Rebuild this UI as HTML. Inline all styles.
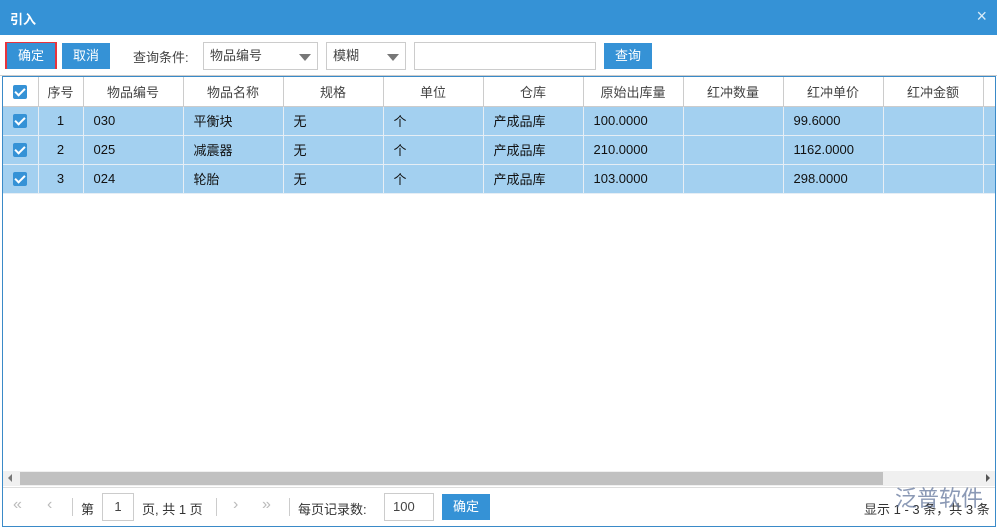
<!DOCTYPE html><html><head><meta charset="utf-8"><style>
*{margin:0;padding:0;box-sizing:border-box}
body{width:997px;height:528px;background:#fff;font-family:"Liberation Sans","Noto Sans CJK SC",sans-serif;font-size:13px;color:#333;position:relative;overflow:hidden}
.abs{position:absolute}
.title{left:0;top:0;width:997px;height:35px;background:#3592d6;color:#fff;font-weight:bold;font-size:13px;padding:9px 10px}
.btn{background:#3592d6;color:#fff;text-align:center;line-height:26px;height:26px}
.sel{border:1px solid #ccc;height:28px;line-height:26px;padding-left:6px;color:#444}
.tri{position:absolute;right:6px;top:11px;border-left:6px solid transparent;border-right:6px solid transparent;border-top:7px solid #777}
table{border-collapse:collapse;table-layout:fixed}
td{height:29px;border-right:1px solid #ddd;border-bottom:1px solid #ddd;white-space:nowrap;overflow:hidden;padding-left:10px;color:#111}
thead td{text-align:center;padding:0;color:#444;border-right:1px solid #ccc;border-bottom:1px solid #ccc}
tbody tr{background:#a3d0f0}
tbody td{border-color:#e6eef5}
.cb{display:inline-block;width:14px;height:14px;background:#3592d6;border-radius:2px;position:relative;vertical-align:middle}
.cb:after{content:"";position:absolute;left:4px;top:1px;width:4px;height:8px;border:solid #fff;border-width:0 2px 2px 0;transform:rotate(45deg)}
.pg{color:#bbb;font-size:16px}
</style></head><body>
<div class="abs title">引入<span style="position:absolute;right:10px;top:6px;font-weight:normal;font-size:18px;color:#d8ebf8">×</span></div>
<div class="abs" style="left:5px;top:42px;width:52px;height:27px;border:2px solid #e8333c"></div>
<div class="abs btn" style="left:7px;top:43px;width:48px">确定</div>
<div class="abs btn" style="left:62px;top:43px;width:48px">取消</div>
<div class="abs" style="left:133px;top:47px;color:#444">查询条件:</div>
<div class="abs sel" style="left:203px;top:42px;width:115px">物品编号<span class="tri"></span></div>
<div class="abs sel" style="left:326px;top:42px;width:80px">模糊<span class="tri"></span></div>
<div class="abs sel" style="left:414px;top:42px;width:182px"></div>
<div class="abs btn" style="left:604px;top:43px;width:48px">查询</div>
<div class="abs" style="left:0;top:75px;width:997px;height:1px;background:#ccc"></div>
<div class="abs" style="left:2px;top:76px;width:994px;height:451px;border:1px solid #3a8ac8"></div>
<div class="abs" style="left:3px;top:77px;width:992px;height:120px;overflow:hidden">
<table style="width:1000px">
<colgroup><col style="width:35px"><col style="width:45px"><col style="width:100px"><col style="width:100px"><col style="width:100px"><col style="width:100px"><col style="width:100px"><col style="width:100px"><col style="width:100px"><col style="width:100px"><col style="width:100px"><col style="width:20px"></colgroup>
<thead><tr><td><span class="cb"></span></td><td>序号</td><td>物品编号</td><td>物品名称</td><td>规格</td><td>单位</td><td>仓库</td><td>原始出库量</td><td>红冲数量</td><td>红冲单价</td><td>红冲金额</td><td></td></tr></thead>
<tbody>
<tr><td style="padding:0;text-align:center"><span class="cb"></span></td><td style="padding:0;text-align:center">1</td><td>030</td><td>平衡块</td><td>无</td><td>个</td><td>产成品库</td><td>100.0000</td><td></td><td>99.6000</td><td></td><td></td></tr>
<tr><td style="padding:0;text-align:center"><span class="cb"></span></td><td style="padding:0;text-align:center">2</td><td>025</td><td>减震器</td><td>无</td><td>个</td><td>产成品库</td><td>210.0000</td><td></td><td>1162.0000</td><td></td><td></td></tr>
<tr><td style="padding:0;text-align:center"><span class="cb"></span></td><td style="padding:0;text-align:center">3</td><td>024</td><td>轮胎</td><td>无</td><td>个</td><td>产成品库</td><td>103.0000</td><td></td><td>298.0000</td><td></td><td></td></tr>
</tbody></table></div>
<div class="abs" style="left:3px;top:471px;width:992px;height:15px;background:#f0f0f0"></div>
<div class="abs" style="left:20px;top:472px;width:863px;height:13px;background:#c1c1c1"></div>
<div class="abs" style="left:8px;top:474px;border-top:4px solid transparent;border-bottom:4px solid transparent;border-right:4px solid #777"></div>
<div class="abs" style="left:986px;top:474px;border-top:4px solid transparent;border-bottom:4px solid transparent;border-left:4px solid #555"></div>
<div class="abs" style="left:3px;top:487px;width:992px;height:1px;background:#ddd"></div>
<div class="abs pg" style="left:13px;top:496px">«</div>
<div class="abs pg" style="left:47px;top:496px">‹</div>
<div class="abs" style="left:72px;top:498px;width:1px;height:18px;background:#ccc"></div>
<div class="abs" style="left:81px;top:499px">第</div>
<div class="abs sel" style="left:102px;top:493px;width:32px;padding:0;text-align:center">1</div>
<div class="abs" style="left:142px;top:499px">页, 共 1 页</div>
<div class="abs" style="left:216px;top:498px;width:1px;height:18px;background:#ccc"></div>
<div class="abs pg" style="left:233px;top:496px">›</div>
<div class="abs pg" style="left:262px;top:496px">»</div>
<div class="abs" style="left:289px;top:498px;width:1px;height:18px;background:#ccc"></div>
<div class="abs" style="left:298px;top:499px">每页记录数:</div>
<div class="abs sel" style="left:384px;top:493px;width:50px;padding-left:8px">100</div>
<div class="abs btn" style="left:442px;top:494px;width:48px">确定</div>
<div class="abs" style="left:864px;top:499px;color:#333">显示 1 - 3 条，共 3 条</div>
<div class="abs" style="left:895px;top:481px;font-size:22px;color:rgba(90,110,150,0.7)">泛普软件</div>
</body></html>
